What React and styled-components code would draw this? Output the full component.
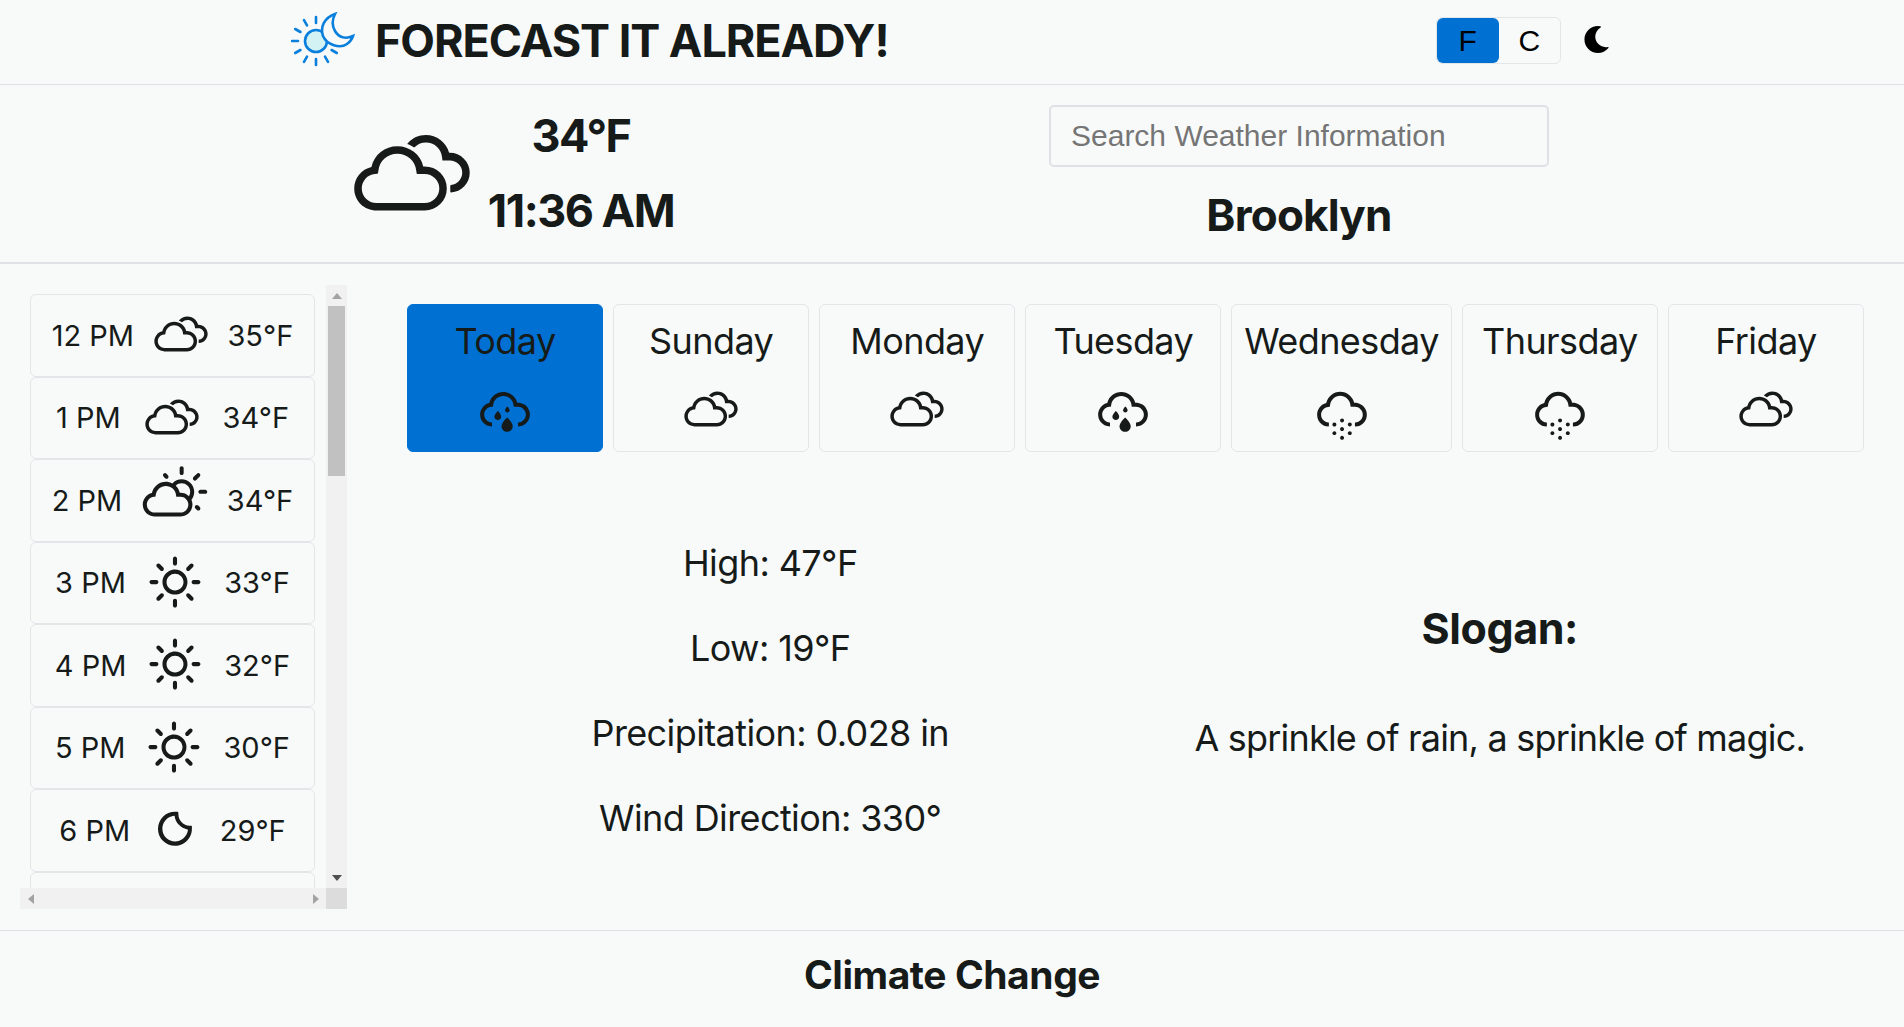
import React from 'react';
import styled, { createGlobalStyle } from 'styled-components';
import {
  WiCloudy,
  WiDayCloudy,
  WiDaySunny,
  WiNightClear,
  WiSprinkle,
  WiSnow,
} from 'react-icons/wi';
import { FaMoon } from 'react-icons/fa';

const GlobalStyle = createGlobalStyle`
  html, body {
    margin: 0;
    padding: 0;
    height: 100%;
    overflow: hidden;
    background: #f8fafa;
    color: #161b19;
    font-family: Inter, "Liberation Sans", sans-serif;
  }
  * { box-sizing: border-box; }
`;

const Page = styled.div`
  width: 1904px;
  height: 1027px;
  display: flex;
  flex-direction: column;
`;

const TopBar = styled.header`
  height: 85px;
  flex: none;
  display: flex;
  align-items: center;
  padding-left: 291px;
  border-bottom: 1px solid #dee2e6;
`;

const Logo = styled.svg`
  width: 66px;
  height: 58px;
  flex: none;
  margin-top: -3px;
`;

const AppTitle = styled.h1`
  margin: -4px 0 0 18px;
  width: 1061px;
  font-size: 45px;
  font-weight: 700;
  letter-spacing: -1.05px;
  white-space: nowrap;
`;

const UnitToggle = styled.div`
  display: flex;
  width: 125px;
  height: 47px;
  margin-top: -3px;
  border: 1px solid #e3e6e9;
  border-radius: 6px;
`;

const UnitButton = styled.button`
  flex: 1;
  padding: 0;
  border: 0;
  border-radius: 6px;
  background: ${(p) => (p.$active ? '#0071d3' : 'transparent')};
  color: #000;
  font-family: "Liberation Sans", sans-serif;
  font-size: 30px;
`;

const ThemeIcon = styled.span`
  display: flex;
  margin: -6px 0 0 22px;
  font-size: 27px;
  color: #000;
`;

const NowBar = styled.section`
  height: 179px;
  flex: none;
  display: flex;
  border-bottom: 2px solid #dee2e6;
`;

const NowLeft = styled.div`
  width: 1049px;
  display: flex;
  align-items: center;
  padding-left: 334px;
`;

const NowIcon = styled.span`
  display: flex;
  margin: 2px -4px 0 0;
  font-size: 156px;
`;

const NowText = styled.div`
  width: 190px;
  margin-top: -2px;
  text-align: center;
  font-size: 45px;
  font-weight: 700;
  letter-spacing: -1.5px;
  line-height: 75px;
  white-space: nowrap;
`;

const NowRight = styled.div`
  width: 500px;
  padding-top: 20px;
  text-align: center;
`;

const SearchInput = styled.input`
  display: block;
  width: 100%;
  height: 62px;
  padding: 0 20px;
  background: transparent;
  border: 2px solid #dee2e6;
  border-radius: 5px;
  font-family: "Liberation Sans", sans-serif;
  font-size: 30px;
  &::placeholder { color: #757575; opacity: 1; }
`;

const CityName = styled.h2`
  margin: 21px 0 0;
  font-size: 44px;
  font-weight: 700;
  letter-spacing: -0.8px;
`;

const Body = styled.main`
  flex: 1;
  min-height: 0;
  display: flex;
`;

const HourPane = styled.aside`
  width: 347px;
  padding: 21px 0 21px 20px;
  flex: none;
`;

const HourFrame = styled.div`
  height: 624px;
  display: grid;
  grid-template-columns: 306px 21px;
  grid-template-rows: 603px 21px;
`;

const HourList = styled.div`
  overflow: hidden;
  padding: 9px 11px 0 10px;
`;

const VerticalBar = styled.div`
  display: flex;
  flex-direction: column;
  background: #f1f1f1;
`;

const HorizontalBar = styled.div`
  display: flex;
  justify-content: space-between;
  background: #f1f1f1;
`;

const ScrollCorner = styled.div`
  background: #dcdcdc;
`;

const ScrollArrow = styled.span`
  width: 21px;
  height: 21px;
  flex: none;
  display: flex;
  align-items: center;
  justify-content: center;
  &::before {
    content: '';
    border-style: solid;
    border-color: transparent;
    ${(p) => p.$dir === 'up' && `border-width: 0 5px 6px; border-bottom-color: #a3a3a3;`}
    ${(p) => p.$dir === 'down' && `border-width: 6px 5px 0; border-top-color: #505050;`}
    ${(p) => p.$dir === 'left' && `border-width: 5px 6px 5px 0; border-right-color: #a3a3a3;`}
    ${(p) => p.$dir === 'right' && `border-width: 5px 0 5px 6px; border-left-color: #a3a3a3;`}
  }
`;

const ScrollThumb = styled.div`
  height: 170px;
  margin: 0 2px;
  background: #c1c1c1;
`;

const ScrollTrack = styled.div`
  flex: 1;
`;

const HourCard = styled.div`
  height: 82.5px;
  display: flex;
  align-items: center;
  justify-content: space-evenly;
  border: 1.5px solid #e3e6e9;
  border-radius: 6px;
  font-size: 29px;
  white-space: nowrap;
`;

const HourIcon = styled.span`
  width: ${(p) => p.$width}px;
  display: flex;
  justify-content: center;
  font-size: 72px;
  svg { flex: none; }
`;

const Forecast = styled.section`
  flex: 1;
  min-width: 0;
  padding: 40px 40px 0 60px;
`;

const DayRow = styled.div`
  display: flex;
  gap: 10px;
`;

const DayCard = styled.div`
  flex: 1 1 0;
  height: 148px;
  padding: 13px 12px 0;
  text-align: center;
  border: 1.5px solid ${(p) => (p.$active ? '#0071d3' : '#e3e6e9')};
  border-radius: 6px;
  background: ${(p) => (p.$active ? '#0071d3' : 'transparent')};
`;

const DayName = styled.div`
  font-size: 36px;
  letter-spacing: -0.6px;
  line-height: 46px;
  white-space: nowrap;
`;

const DayIcon = styled.span`
  display: flex;
  justify-content: center;
  margin-top: 10px;
  font-size: 72px;
`;

const Details = styled.div`
  display: grid;
  grid-template-columns: 1fr 1fr;
  margin-top: 88px;
`;

const StatList = styled.div`
  padding-right: 2px;
  text-align: center;
`;

const Stat = styled.p`
  margin: 0 0 39px;
  font-size: 36px;
  letter-spacing: -0.6px;
  line-height: 46px;
`;

const SloganBox = styled.div`
  padding-top: 62px;
  text-align: center;
`;

const SloganTitle = styled.h3`
  margin: 0 0 61px;
  font-size: 43px;
  font-weight: 700;
  letter-spacing: -0.4px;
  line-height: 52px;
`;

const SloganText = styled.p`
  margin: 0;
  font-size: 36px;
  letter-spacing: -0.8px;
  line-height: 46px;
  white-space: nowrap;
`;

const Footer = styled.footer`
  height: 97px;
  flex: none;
  display: flex;
  align-items: center;
  justify-content: center;
  padding-bottom: 9px;
  border-top: 1px solid #dee2e6;
  font-size: 39px;
  font-weight: 700;
  letter-spacing: -0.45px;
`;

const hours = [
  ['12 PM', WiCloudy, 35, 52], ['1 PM', WiCloudy, 34, 52], ['2 PM', WiDayCloudy, 34, 63],
  ['3 PM', WiDaySunny, 33, 50], ['4 PM', WiDaySunny, 32, 50], ['5 PM', WiDaySunny, 30, 50],
  ['6 PM', WiNightClear, 29, 33], ['7 PM', WiNightClear, 28, 33],
];

const days = [
  ['Today', WiSprinkle], ['Sunday', WiCloudy], ['Monday', WiCloudy],
  ['Tuesday', WiSprinkle], ['Wednesday', WiSnow], ['Thursday', WiSnow],
  ['Friday', WiCloudy],
];

const stats = ['High: 47°F', 'Low: 19°F', 'Precipitation: 0.028 in', 'Wind Direction: 330°'];

const rayAngles = [0, 120, 150, 180, 210, 240, 270, 300, 330];

function SunMoonLogo() {
  return (
    <Logo viewBox="0 0 66 58" fill="none" stroke="#0a7fdc" strokeWidth="2.6" strokeLinecap="round">
      <circle cx="25" cy="29" r="11" fill="#d2f2f4" />
      {rayAngles.map((a) => (
        <line key={a} x1="25" y1="11" x2="25" y2="5" transform={`rotate(${a} 25 29)`} />
      ))}
      <path
        d="M44 2C33 6 29 15 32 24C36 33 49 37 56 32C59 30 61 27 62 24C55 27 48 26 44 19C41 14 41 8 44 2Z"
        fill="#f8fafa"
      />
    </Logo>
  );
}

export default function App() {
  return (
    <Page>
      <GlobalStyle />
      <TopBar>
        <SunMoonLogo />
        <AppTitle>FORECAST IT ALREADY!</AppTitle>
        <UnitToggle>
          <UnitButton $active>F</UnitButton>
          <UnitButton>C</UnitButton>
        </UnitToggle>
        <ThemeIcon><FaMoon /></ThemeIcon>
      </TopBar>
      <NowBar>
        <NowLeft>
          <NowIcon><WiCloudy /></NowIcon>
          <NowText>
            <div>34°F</div>
            <div>11:36 AM</div>
          </NowText>
        </NowLeft>
        <NowRight>
          <SearchInput placeholder="Search Weather Information" />
          <CityName>Brooklyn</CityName>
        </NowRight>
      </NowBar>
      <Body>
        <HourPane>
          <HourFrame>
            <HourList>
              {hours.map(([label, Icon, temp, width]) => (
                <HourCard key={label}>
                  <span>{label}</span>
                  <HourIcon $width={width}><Icon /></HourIcon>
                  <span>{temp}°F</span>
                </HourCard>
              ))}
            </HourList>
            <VerticalBar>
              <ScrollArrow $dir="up" />
              <ScrollThumb />
              <ScrollTrack />
              <ScrollArrow $dir="down" />
            </VerticalBar>
            <HorizontalBar>
              <ScrollArrow $dir="left" />
              <ScrollArrow $dir="right" />
            </HorizontalBar>
            <ScrollCorner />
          </HourFrame>
        </HourPane>
        <Forecast>
          <DayRow>
            {days.map(([name, Icon], i) => (
              <DayCard key={name} $active={i === 0}>
                <DayName>{name}</DayName>
                <DayIcon><Icon /></DayIcon>
              </DayCard>
            ))}
          </DayRow>
          <Details>
            <StatList>
              {stats.map((s) => <Stat key={s}>{s}</Stat>)}
            </StatList>
            <SloganBox>
              <SloganTitle>Slogan:</SloganTitle>
              <SloganText>A sprinkle of rain, a sprinkle of magic.</SloganText>
            </SloganBox>
          </Details>
        </Forecast>
      </Body>
      <Footer>Climate Change</Footer>
    </Page>
  );
}
